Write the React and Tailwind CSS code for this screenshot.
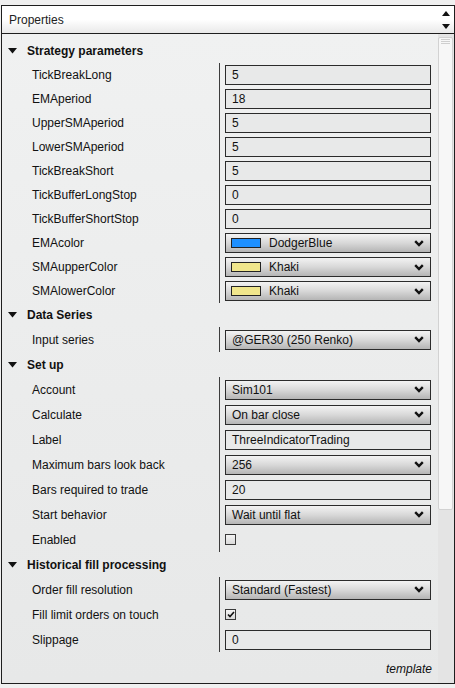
import React from 'react';

const font = { fontFamily: '"Liberation Sans", Arial, sans-serif' };

const Caret = () => (
    <svg width="9" height="6" viewBox="0 0 9 6" className="shrink-0">
        <path d="M0 0 L9 0 L4.5 5.5 Z" fill="#111" />
    </svg>
);

const Chevron = () => (
    <svg width="10" height="7" viewBox="0 0 10 7" className="shrink-0">
        <path d="M1.2 1.2 L5 5 L8.8 1.2" fill="none" stroke="#111" strokeWidth="2.4" />
    </svg>
);

const Section = ({ title, h, children }) => (
    <div>
        <div className={`flex items-center ${h} pl-[6px] gap-[10px] font-bold text-[12px] text-[#111]`}>
            <Caret />
            <span>{title}</span>
        </div>
        {children}
    </div>
);

const Row = ({ label, h, children }) => (
    <div className={`flex ${h}`}>
        <div className="w-[217px] pl-[30px] flex items-center text-[12px] text-[#111] whitespace-nowrap">{label}</div>
        <div className="w-[219px] border-l border-[#3c3c3c] pl-[5px] pr-[7px] flex items-center">{children}</div>
    </div>
);

const TextBox = ({ value }) => (
    <div className="h-[20px] w-full border border-[#2b2b2b] bg-[#e8e9e9] pl-[6px] flex items-center text-[12px] text-[#111]">
        {value}
    </div>
);

const Select = ({ value, swatch }) => (
    <div className="h-[20px] w-full border border-[#2b2b2b] bg-gradient-to-b from-[#f3f3f3] via-[#d8d8d8] to-[#b5b5b5] pl-[5px] pr-[6px] flex items-center text-[12px] text-[#111]">
        {swatch && <div className={`w-[30px] h-[10px] border border-[#222] mr-[8px] ${swatch}`} />}
        <span className={swatch ? '' : 'pl-[1px]'}>{value}</span>
        <div className="flex-1" />
        <Chevron />
    </div>
);

const Check = ({ checked }) => (
    <div className="w-[11px] h-[11px] border border-[#3a3a3a] bg-gradient-to-b from-[#f4f4f4] to-[#dadada] flex items-center justify-center">
        {checked && (
            <svg width="8" height="7" viewBox="0 0 8 7">
                <path d="M1 3.5 L3 5.5 L7 1" fill="none" stroke="#111" strokeWidth="1.6" />
            </svg>
        )}
    </div>
);

export default function App() {
    const a = 'h-[24px]';
    const b = 'h-[25px]';
    return (
        <div className="w-[455px] h-[688px] bg-[#f0f0f0] pt-[5px] overflow-hidden" style={font}>
            {/* header */}
            <div className="ml-[1px] w-[454px] h-[29px] border border-[#1e1e1e] bg-gradient-to-b from-[#ffffff] via-[#ffffff] to-[#e9e9e9] flex">
                <div className="flex-1 pl-[7px] flex items-center text-[12px] text-[#222]">Properties</div>
                <div className="w-[16px] flex flex-col items-center justify-center gap-[8px]">
                    <svg width="8" height="5" viewBox="0 0 8 5"><path d="M0 5 L8 5 L4 0 Z" fill="#111" /></svg>
                    <svg width="8" height="5" viewBox="0 0 8 5"><path d="M0 0 L8 0 L4 5 Z" fill="#111" /></svg>
                </div>
            </div>

            {/* panel */}
            <div className="ml-[1px] w-[454px] h-[650px] border border-t-0 border-[#1e1e1e] bg-gradient-to-b from-[#f0f1f1] to-[#e7e8e8] flex">
                <div className="w-[436px] pt-[5px] flex flex-col">
                    <Section title="Strategy parameters" h={a}>
                        <Row label="TickBreakLong" h={a}><TextBox value="5" /></Row>
                        <Row label="EMAperiod" h={a}><TextBox value="18" /></Row>
                        <Row label="UpperSMAperiod" h={a}><TextBox value="5" /></Row>
                        <Row label="LowerSMAperiod" h={a}><TextBox value="5" /></Row>
                        <Row label="TickBreakShort" h={a}><TextBox value="5" /></Row>
                        <Row label="TickBufferLongStop" h={a}><TextBox value="0" /></Row>
                        <Row label="TickBufferShortStop" h={a}><TextBox value="0" /></Row>
                        <Row label="EMAcolor" h={a}><Select value="DodgerBlue" swatch="bg-[#1e90ff]" /></Row>
                        <Row label="SMAupperColor" h={a}><Select value="Khaki" swatch="bg-[#f0e68c]" /></Row>
                        <Row label="SMAlowerColor" h={a}><Select value="Khaki" swatch="bg-[#f0e68c]" /></Row>
                    </Section>
                    <Section title="Data Series" h={a}>
                        <Row label="Input series" h={b}><Select value="@GER30 (250 Renko)" /></Row>
                    </Section>
                    <Section title="Set up" h={b}>
                        <Row label="Account" h={b}><Select value="Sim101" /></Row>
                        <Row label="Calculate" h={b}><Select value="On bar close" /></Row>
                        <Row label="Label" h={b}><TextBox value="ThreeIndicatorTrading" /></Row>
                        <Row label="Maximum bars look back" h={b}><Select value="256" /></Row>
                        <Row label="Bars required to trade" h={b}><TextBox value="20" /></Row>
                        <Row label="Start behavior" h={b}><Select value="Wait until flat" /></Row>
                        <Row label="Enabled" h={b}><Check /></Row>
                    </Section>
                    <Section title="Historical fill processing" h={b}>
                        <Row label="Order fill resolution" h={b}><Select value="Standard (Fastest)" /></Row>
                        <Row label="Fill limit orders on touch" h={b}><Check checked /></Row>
                        <Row label="Slippage" h={b}><TextBox value="0" /></Row>
                    </Section>
                    <div className="mt-[8px] h-[18px] pr-[6px] flex items-center justify-end text-[12px] italic text-[#111]">template</div>
                </div>

                {/* scrollbar */}
                <div className="flex-1 bg-[#e4e4e4] pt-[3px] pr-[1px]">
                    <div className="h-[473px] bg-[#f7f7f7] border border-[#d2d2d2] rounded-[2px] flex flex-col items-center pt-[1px] gap-[1px]">
                        <div className="w-[9px] h-[1px] bg-[#cfcfcf]" />
                        <div className="w-[9px] h-[1px] bg-[#cfcfcf]" />
                        <div className="w-[9px] h-[1px] bg-[#cfcfcf]" />
                    </div>
                </div>
            </div>
        </div>
    );
}
